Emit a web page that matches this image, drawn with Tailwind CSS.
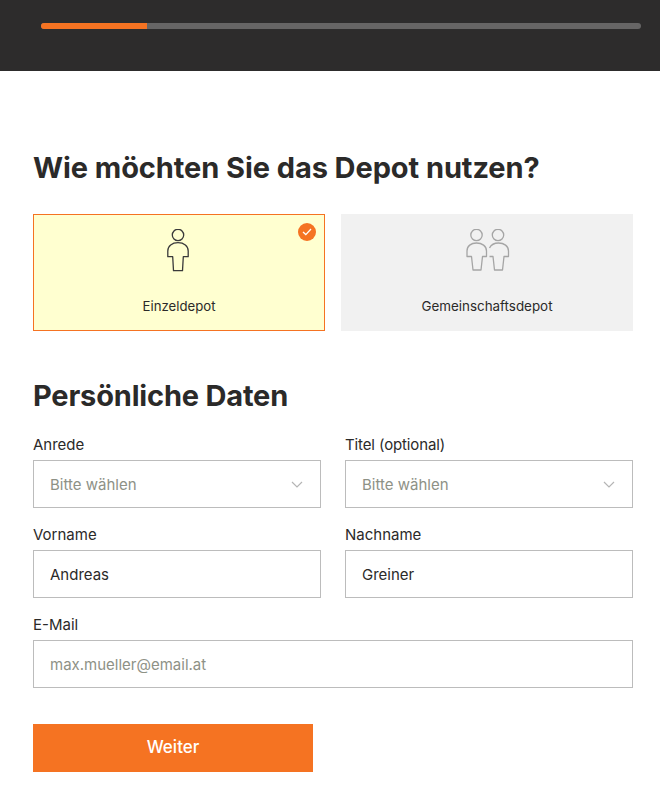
<!DOCTYPE html>
<html lang="de">

<head>
    <meta charset="UTF-8" />
    <meta name="viewport" content="width=device-width, initial-scale=1.0" />
    <title>Depot</title>
    <script src="https://cdn.jsdelivr.net/npm/@tailwindcss/browser@4"></script>
</head>

<body class="bg-white font-['Inter',sans-serif] text-[#2b2a29]">
    <header class="h-[71px] bg-[#2d2c2c] pt-[23px] pl-[41px] pr-[19px]">
        <div class="h-[6px] rounded-full bg-[#666565] overflow-hidden">
            <div class="h-full w-[106px] bg-[#f57322]"></div>
        </div>
    </header>

    <main class="px-[33px] pr-[27px]">
        <h1 class="mt-[79px] text-[29px] leading-[36px] font-bold tracking-[-0.08px]">Wie möchten Sie das Depot nutzen?</h1>

        <div class="mt-[28px] grid grid-cols-2 gap-4">
            <div class="relative h-[117px] flex flex-col items-center border border-[#f57322] bg-[#ffffd0]">
                <svg class="mt-[14px] mr-[2px]" width="24" height="44" viewBox="0 0 24 44" fill="none" stroke="#3a3a3a" stroke-width="1.3">
                    <circle cx="12" cy="6" r="5.7" />
                    <path d="M6.7 27.7H1.8V22C1.8 17 6 13.7 12 13.7S22.2 17 22.2 22V27.7H17.3L16.5 41.7H7.5Z" stroke-linejoin="round" />
                </svg>
                <span class="mt-[24px] text-[13.2px] leading-[18px]">Einzeldepot</span>
                <span class="absolute top-[8px] right-[8px] w-[18px] h-[18px] rounded-full bg-[#f57322] flex items-center justify-center">
                    <svg width="10" height="8" viewBox="0 0 10 8" fill="none" stroke="#fff" stroke-width="1.3">
                        <path d="M1 4L3.8 6.6L9 1" />
                    </svg>
                </span>
            </div>
            <div class="h-[117px] flex flex-col items-center bg-[#f1f1f1]">
                <svg class="mt-[15px] ml-[1px]" width="44" height="44" viewBox="0 0 44 44" fill="none" stroke="#a5a5a5" stroke-width="1.3">
                    <circle cx="10.5" cy="6" r="5.7" />
                    <circle cx="32" cy="6" r="5.7" />
                    <path d="M1 27.5V22C1 17 5 14 10.5 14S20.5 17 20.5 22V27.5H16.5L15 41H7L5.5 27.5Z" stroke-linejoin="round" />
                    <path d="M23.5 19C25 16 28 14 32.5 14C38 14 42.5 17 42.5 22V27.5H38L36.5 41H28.5L27 27.5H23.5" stroke-linejoin="round" />
                </svg>
                <span class="mt-[24px] text-[13.4px] leading-[18px]">Gemeinschaftsdepot</span>
            </div>
        </div>

        <h2 class="mt-[46px] text-[29px] leading-[38px] font-bold tracking-[-0.18px]">Persönliche Daten</h2>

        <form action="#" class="mt-[19px] w-[600px]">
            <div class="grid grid-cols-2 gap-x-6 gap-y-4">
                <div>
                    <label class="block text-[15px] leading-[22px] mb-[4px]">Anrede</label>
                    <div class="h-[48px] border border-[#bcbcbc] pl-4 pr-[17px] flex items-center justify-between text-[15px] text-[#8e9186]">
                        <span class="pt-[2px]">Bitte wählen</span>
                        <svg width="12" height="7" viewBox="0 0 12 7" fill="none" stroke="#b5b5b5" stroke-width="1.2">
                            <path d="M1 1L6 6L11 1" />
                        </svg>
                    </div>
                </div>
                <div>
                    <label class="block text-[15px] leading-[22px] mb-[4px] tracking-[-0.12px]">Titel (optional)</label>
                    <div class="h-[48px] border border-[#bcbcbc] pl-4 pr-[17px] flex items-center justify-between text-[15px] text-[#8e9186]">
                        <span class="pt-[2px]">Bitte wählen</span>
                        <svg width="12" height="7" viewBox="0 0 12 7" fill="none" stroke="#b5b5b5" stroke-width="1.2">
                            <path d="M1 1L6 6L11 1" />
                        </svg>
                    </div>
                </div>
                <div>
                    <label class="block text-[15px] leading-[22px] mb-[4px]">Vorname</label>
                    <input type="text" value="Andreas" class="block w-full h-[48px] border border-[#bcbcbc] px-4 text-[15px] text-[#2b2a29] outline-none" />
                </div>
                <div>
                    <label class="block text-[15px] leading-[22px] mb-[4px]">Nachname</label>
                    <input type="text" value="Greiner" class="block w-full h-[48px] border border-[#bcbcbc] px-4 text-[15px] text-[#2b2a29] outline-none" />
                </div>
                <div class="col-span-2">
                    <label class="block text-[15px] leading-[22px] mb-[4px]">E-Mail</label>
                    <input type="text" placeholder="max.mueller@email.at" class="block w-full h-[48px] border border-[#bcbcbc] px-4 text-[15px] outline-none placeholder:text-[#8e9186]" />
                </div>
            </div>
            <button type="submit" class="mt-[36px] block w-[280px] h-[48px] bg-[#f57322] text-white text-[17px] font-medium">Weiter</button>
        </form>
    </main>
</body>

</html>
